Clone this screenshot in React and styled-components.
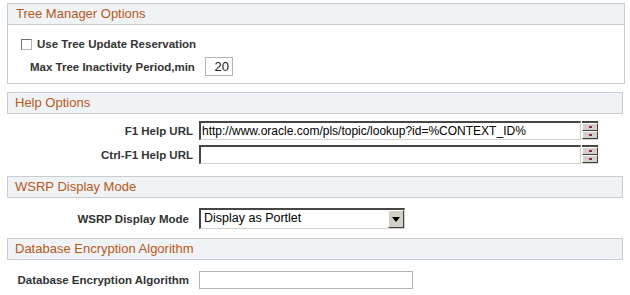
import React from "react";
import styled, { createGlobalStyle } from "styled-components";

const GlobalStyle = createGlobalStyle`
  body {
    margin: 0;
    background: #ffffff;
    font-family: Arial, "Liberation Sans", sans-serif;
  }
`;

function App() {
  return (
    <Page>
      <GlobalStyle />
      <GroupBox>
        <Header>Tree Manager Options</Header>
        <BoxBody>
          <CheckRow>
            <CheckBox />
            <Label>Use Tree Update Reservation</Label>
          </CheckRow>
          <FieldRow $labelWidth={190} $pad={22} $gap={10} $top={7}>
            <Label $left>Max Tree Inactivity Period,min</Label>
            <NumberInput>20</NumberInput>
          </FieldRow>
        </BoxBody>
      </GroupBox>

      <Header $bare $top={8}>Help Options</Header>
      <FieldRow $labelWidth={186} $gap={6} $top={7}>
        <Label>F1 Help URL</Label>
        <UrlInput>http://www.oracle.com/pls/topic/lookup?id=%CONTEXT_ID%</UrlInput>
        <Spinner>
          <SpinButton />
          <SpinButton />
        </Spinner>
      </FieldRow>
      <FieldRow $labelWidth={186} $gap={6} $top={5}>
        <Label>Ctrl-F1 Help URL</Label>
        <UrlInput />
        <Spinner>
          <SpinButton />
          <SpinButton />
        </Spinner>
      </FieldRow>

      <Header $bare $top={12}>WSRP Display Mode</Header>
      <FieldRow $labelWidth={182} $gap={10} $top={10}>
        <Label>WSRP Display Mode</Label>
        <Select>
          <SelectText>Display as Portlet</SelectText>
          <SelectArrow>
            <svg width="8" height="5" viewBox="0 0 8 5">
              <path d="M0 0h8L4 5z" fill="#000" />
            </svg>
          </SelectArrow>
        </Select>
      </FieldRow>

      <Header $bare $top={9}>Database Encryption Algorithm</Header>
      <FieldRow $labelWidth={182} $gap={10} $top={11}>
        <Label>Database Encryption Algorithm</Label>
        <PlainInput />
      </FieldRow>
    </Page>
  );
}

export default App;

const Page = styled.div`
  width: 630px;
  padding: 3px 6px 0 7px;
  box-sizing: border-box;
  display: flex;
  flex-direction: column;
`;

const GroupBox = styled.div`
  width: 618px;
  border: 1px solid #c9cdd1;
  box-sizing: border-box;
`;

const Header = styled.div`
  height: ${(p) => (p.$bare ? "22px" : "21px")};
  width: ${(p) => (p.$bare ? "616px" : "auto")};
  margin-top: ${(p) => p.$top || 0}px;
  box-sizing: border-box;
  background: #f0f3f5;
  border: ${(p) => (p.$bare ? "1px solid #c9cdd1" : "none")};
  border-bottom: 1px solid #c9cdd1;
  color: #b8581a;
  font-size: 13px;
  line-height: 20px;
  padding-left: ${(p) => (p.$bare ? "7px" : "8px")};
  white-space: nowrap;
`;

const BoxBody = styled.div`
  padding: 13px 0 7px 0;
  display: flex;
  flex-direction: column;
`;

const CheckRow = styled.div`
  display: flex;
  align-items: center;
  height: 12px;
  padding-left: 13px;
  gap: 5px;
`;

const CheckBox = styled.span`
  width: 11px;
  height: 11px;
  box-sizing: border-box;
  border: 1px solid #6f6f6f;
  border-right-color: #b5b5b5;
  border-bottom-color: #b5b5b5;
  background: #fff;
`;

const Label = styled.span`
  font-size: 11.5px;
  font-weight: bold;
  color: #333;
  white-space: nowrap;
  text-align: ${(p) => (p.$left ? "left" : "right")};
`;

const FieldRow = styled.div`
  display: flex;
  align-items: center;
  margin-top: ${(p) => p.$top || 0}px;
  padding-left: ${(p) => p.$pad || 0}px;

  & > ${Label} {
    width: ${(p) => (p.$pad ? "auto" : `${p.$labelWidth}px`)};
    margin-right: ${(p) => p.$gap}px;
  }
`;

const NumberInput = styled.div`
  width: 28px;
  height: 19px;
  box-sizing: border-box;
  border: 1px solid #b3b3b3;
  font-size: 13px;
  line-height: 17px;
  text-align: right;
  padding-right: 3px;
  color: #222;
`;

const UrlInput = styled.div`
  width: 382px;
  height: 19px;
  box-sizing: border-box;
  border-top: 2px solid #464646;
  border-left: 2px solid #464646;
  border-right: 1px solid #d4d0c8;
  border-bottom: 1px solid #d4d0c8;
  font-size: 12px;
  line-height: 16px;
  padding-left: 1px;
  color: #000;
  white-space: nowrap;
  overflow: hidden;
`;

const Spinner = styled.div`
  display: flex;
  flex-direction: column;
  margin-left: 1px;
  height: 19px;
  box-sizing: border-box;
  border-top: 2px solid #464646;
  border-bottom: 1px solid #d4d0c8;
  justify-content: space-between;
`;

const SpinButton = styled.span`
  position: relative;
  width: 16px;
  height: 8px;
  box-sizing: border-box;
  background: #d4d0c8;
  border-top: 1px solid #ffffff;
  border-left: 1px solid #ffffff;
  border-right: 1px solid #404040;
  border-bottom: 1px solid #404040;

  &::after {
    content: "";
    position: absolute;
    left: 6px;
    top: 2px;
    width: 3px;
    height: 2px;
    background: #8a2a50;
  }
`;

const Select = styled.div`
  width: 206px;
  height: 21px;
  box-sizing: border-box;
  display: flex;
  align-items: stretch;
  border-top: 2px solid #464646;
  border-left: 2px solid #464646;
  border-right: 1px solid #d4d0c8;
  border-bottom: 1px solid #d4d0c8;
`;

const SelectText = styled.span`
  flex: 1;
  font-size: 12.5px;
  line-height: 17px;
  padding-left: 3px;
  color: #000;
`;

const SelectArrow = styled.span`
  width: 16px;
  box-sizing: border-box;
  background: #d4d0c8;
  border-top: 1px solid #ffffff;
  border-left: 1px solid #ffffff;
  border-right: 1px solid #404040;
  border-bottom: 1px solid #404040;
  display: flex;
  align-items: center;
  justify-content: center;
`;

const PlainInput = styled.div`
  width: 214px;
  height: 18px;
  box-sizing: border-box;
  border: 1px solid #b3b3b3;
`;
